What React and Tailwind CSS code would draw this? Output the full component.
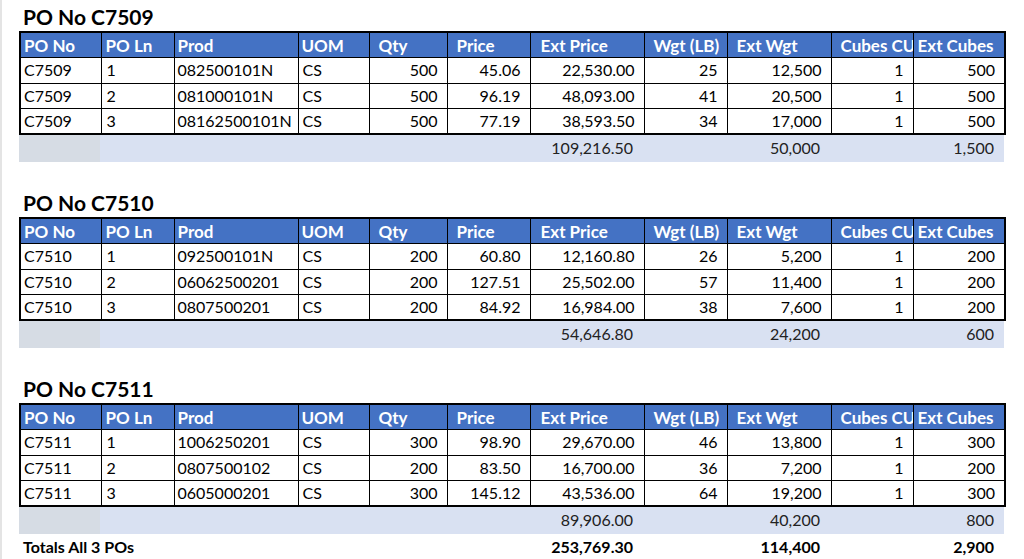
import React from 'react';

const cols = [81, 73, 124, 71, 78, 83, 114, 83, 104, 82, 92];

const heads = [
  { t: 'PO No', pl: 'pl-[3px]' },
  { t: 'PO Ln', pl: 'pl-[4px]' },
  { t: 'Prod', pl: 'pl-[3px]' },
  { t: 'UOM', pl: 'pl-[3px]' },
  { t: 'Qty', pl: 'pl-[9px]' },
  { t: 'Price', pl: 'pl-[9px]' },
  { t: 'Ext Price', pl: 'pl-[10px]' },
  { t: 'Wgt (LB)', pl: 'pl-[9px]' },
  { t: 'Ext Wgt', pl: 'pl-[9px]' },
  { t: 'Cubes CU', pl: 'pl-[9px]' },
  { t: 'Ext Cubes', pl: 'pl-[4px]' },
];

const pos = [
  {
    no: 'C7509',
    rows: [
      ['1', '082500101N', '500', '45.06', '22,530.00', '25', '12,500', '1', '500'],
      ['2', '081000101N', '500', '96.19', '48,093.00', '41', '20,500', '1', '500'],
      ['3', '08162500101N', '500', '77.19', '38,593.50', '34', '17,000', '1', '500'],
    ],
    tot: ['109,216.50', '50,000', '1,500'],
  },
  {
    no: 'C7510',
    rows: [
      ['1', '092500101N', '200', '60.80', '12,160.80', '26', '5,200', '1', '200'],
      ['2', '06062500201', '200', '127.51', '25,502.00', '57', '11,400', '1', '200'],
      ['3', '0807500201', '200', '84.92', '16,984.00', '38', '7,600', '1', '200'],
    ],
    tot: ['54,646.80', '24,200', '600'],
  },
  {
    no: 'C7511',
    rows: [
      ['1', '1006250201', '300', '98.90', '29,670.00', '46', '13,800', '1', '300'],
      ['2', '0807500102', '200', '83.50', '16,700.00', '36', '7,200', '1', '200'],
      ['3', '0605000201', '300', '145.12', '43,536.00', '64', '19,200', '1', '300'],
    ],
    tot: ['89,906.00', '40,200', '800'],
  },
];

const Cols = () => (
  <colgroup>
    {cols.map((w, i) => (
      <col key={i} style={{ width: w }} />
    ))}
  </colgroup>
);

const td = 'h-[25.5px] border border-black p-0 whitespace-nowrap';
const num = `${td} text-right pr-[9px]`;
const txt = `${td} text-left pl-[3px]`;

const TotalRow = ({ vals, bold, label }) => (
  <table className="w-[985px] table-fixed border-collapse">
    <Cols />
    <tbody>
      <tr className={`h-[26.5px] ${bold ? 'font-bold text-black' : 'text-[#222]'}`}>
        <td className={`p-0 pl-[4px] whitespace-nowrap ${bold ? '' : 'bg-[#d6dce4]'}`}>{label}</td>
        {[0, 1, 2, 3, 4].map((i) => (
          <td key={i} className={bold ? '' : 'bg-[#d9e1f2]'} />
        ))}
        <td className={`p-0 pr-[10px] text-right ${bold ? '' : 'bg-[#d9e1f2]'}`}>{vals[0]}</td>
        <td className={bold ? '' : 'bg-[#d9e1f2]'} />
        <td className={`p-0 pr-[10px] text-right ${bold ? '' : 'bg-[#d9e1f2]'}`}>{vals[1]}</td>
        <td className={bold ? '' : 'bg-[#d9e1f2]'} />
        <td className={`p-0 pr-[10px] text-right ${bold ? '' : 'bg-[#d9e1f2]'}`}>{vals[2]}</td>
      </tr>
    </tbody>
  </table>
);

const PoTable = ({ po, fixed }) => (
  <section className={fixed ? 'h-[186px]' : ''}>
    <h2 className="h-[31px] pl-[4px] pt-[3px] text-[21px] font-bold leading-[27px] text-black">
      PO No {po.no}
    </h2>
    <table className="w-[985px] table-fixed border-collapse border-2 border-black">
      <Cols />
      <thead>
        <tr className="bg-[#4472c4] text-white font-bold text-[17px]">
          {heads.map((h) => (
            <th
              key={h.t}
              className={`h-[25.5px] border border-black p-0 ${h.pl} text-left font-bold whitespace-nowrap overflow-hidden`}
            >
              {h.t}
            </th>
          ))}
        </tr>
      </thead>
      <tbody className="text-black">
        {po.rows.map((r) => (
          <tr key={r[0]}>
            <td className={txt}>{po.no}</td>
            <td className={`${txt} pl-[5px]`}>{r[0]}</td>
            <td className={txt}>{r[1]}</td>
            <td className={`${txt} pl-[4px]`}>CS</td>
            {r.slice(2).map((v, i) => (
              <td key={i} className={num}>
                {v}
              </td>
            ))}
          </tr>
        ))}
      </tbody>
    </table>
    <TotalRow vals={po.tot} />
  </section>
);

export default function App() {
  return (
    <div
      className="w-[1024px] h-[559px] overflow-hidden bg-white border-l-2 border-[#e4e4e4] pl-[17px] text-[16px] leading-none"
      style={{ fontFamily: 'Lato, "Open Sans", sans-serif' }}
    >
      {pos.map((po, i) => (
        <PoTable key={po.no} po={po} fixed={i < 2} />
      ))}
      <TotalRow vals={['253,769.30', '114,400', '2,900']} bold label="Totals All 3 POs" />
    </div>
  );
}
